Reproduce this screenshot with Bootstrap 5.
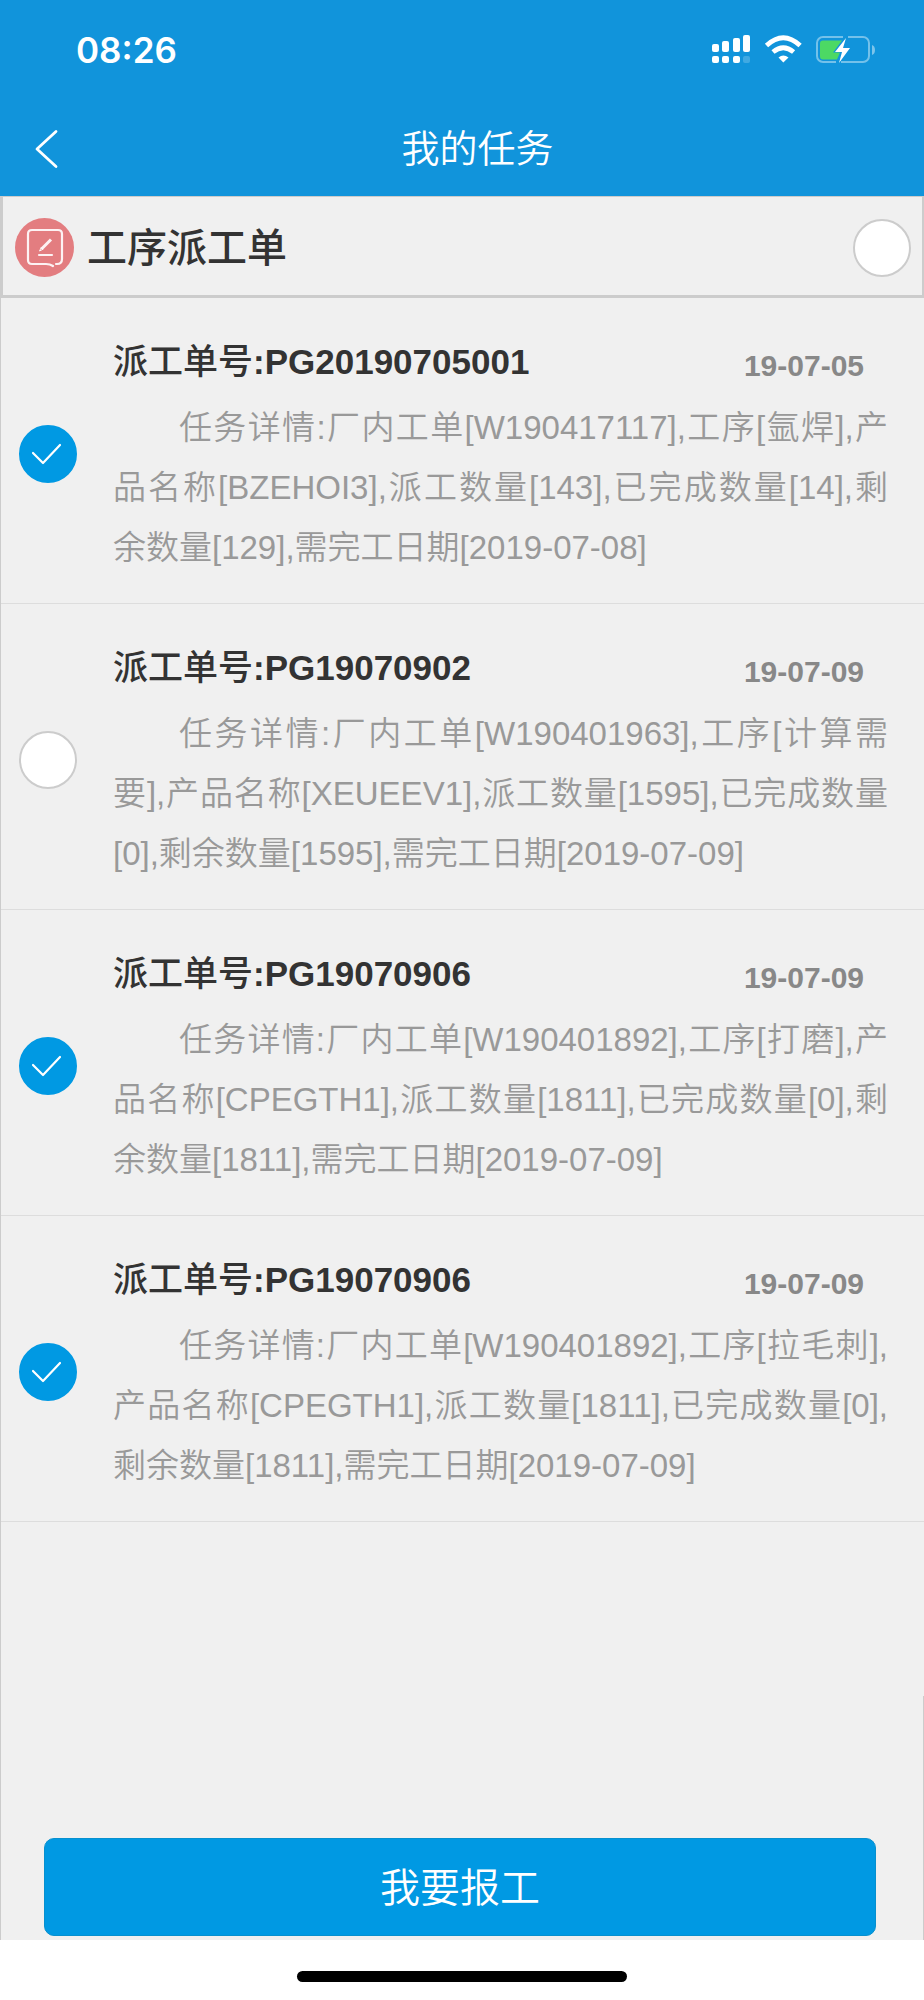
<!DOCTYPE html>
<html lang="zh-CN">
<head>
<meta charset="utf-8">
<meta name="viewport" content="width=device-width, initial-scale=1">
<title>我的任务</title>
<link href="https://cdn.jsdelivr.net/npm/bootstrap@5.3.0/dist/css/bootstrap.min.css" rel="stylesheet">
<style>
  body { font-family: "Liberation Sans", "Noto Sans CJK SC", sans-serif; color: #333; }
  .app-header { background: #1194db; }
  .status-bar { height: 100px; padding: 0 48px 0 76px; }
  .clock { font: 600 35px/1 Inter, sans-serif; }
  .nav-row { height: 96px; padding: 2px 33px 0 32px; }
  .back-btn { width: 32px; height: 48px; }
  .page-title { font-size: 38px; line-height: 48px; font-weight: 350; }
  .group-bar { height: 102px; padding: 4px 11px 0 12px; border: solid #ccc; border-width: 1px 2px 3px 3px; }
  .group-title { font-size: 40px; line-height: 60px; font-weight: 500; }
  .task-area { background: #f0f0f0; }
  .task-list { border-left: 1px solid #ccc; }
  .task-row { padding: 36px 36px 25px 18px; gap: 36px; border-bottom: 1px solid #ddd; }
  .task-no { font-size: 35px; line-height: 56px; font-weight: 500; margin-bottom: 8px; }
  .task-date { font-size: 30px; line-height: 56px; font-weight: 700; color: #888; padding: 4px 24px 0 0; }
  .task-detail { font-size: 33px; line-height: 60px; font-weight: 350; color: #999; text-indent: 2em; text-align: justify; }
  .round-check { appearance: none; width: 58px; height: 58px; margin: 0; border: 2px solid #ccc; border-radius: 50%; background: #fff; }
  .round-check:checked { border-color: #0099e3; background: #0099e3 url("data:image/svg+xml,%3Csvg xmlns='http://www.w3.org/2000/svg' viewBox='0 0 54 54'%3E%3Cpath d='M12 26l10 10 17-18' fill='none' stroke='%23fff' stroke-width='2.2' stroke-linecap='round' stroke-linejoin='round'/%3E%3C/svg%3E"); }
  .action-area { padding: 142px 47px 4px 43px; border: solid #ccc; border-width: 0 1px; }
  .report-btn { --bs-btn-color: #fff; --bs-btn-bg: #0099e3; --bs-btn-border-color: #0790cf; --bs-btn-hover-color: #fff; --bs-btn-hover-bg: #008fd5; height: 98px; padding: 8px 12px 6px; font-size: 40px; line-height: 56px; font-weight: 350; border-radius: 10px; }
  .home-area { height: 60px; padding-top: 31px; }
  .home-bar { width: 330px; height: 11px; background: #000; }
</style>
</head>
<body class="d-flex flex-column min-vh-100 bg-white">
<header class="app-header text-white">
  <div class="status-bar d-flex align-items-center justify-content-between">
    <span class="clock">08:26</span>
    <svg width="166" height="30" viewBox="0 0 166 30" role="img" aria-label="信号、无线网络、正在充电">
      <g fill="#fff">
        <rect x="2" y="9" width="7" height="8" rx="2"/><rect x="12" y="6" width="7" height="11" rx="2"/><rect x="23" y="3" width="7" height="14" rx="2"/><rect x="33" y="0" width="7" height="17" rx="2"/>
        <rect x="2" y="21" width="7" height="7" rx="2"/><rect x="12" y="21" width="7" height="7" rx="2"/><rect x="23" y="21" width="7" height="7" rx="2"/><rect x="33" y="21" width="7" height="7" rx="2" opacity=".2"/>
        <path d="M68.500 22.500Q73.300 18.600 78.500 22.500L73.300 27.600z"/>
      </g>
      <g fill="none" stroke="#fff" stroke-width="4.800">
        <path d="M56.500 10.500Q73.300-5 90.100 10.500"/><path d="M63 17Q73.300 8.500 83.600 17"/>
      </g>
      <path d="M133 2H113a6 6 0 0 0-6 6v13a6 6 0 0 0 6 6h13M138 2h15a6 6 0 0 1 6 6v13a6 6 0 0 1-6 6h-22" fill="none" stroke="#fff" stroke-opacity=".42" stroke-width="2"/>
      <path d="M162 10q3 1 3 5t-3 5z" fill="#fff" opacity=".45"/>
      <path d="M113 5.500h19l-9 12h7l-3 7h-14q-3 0-3-3v-13q0-3 3-3z" fill="#4cd964"/>
      <path d="M136 3l-11 14h7l-3 11 11-15h-7z" fill="#fff"/>
    </svg>
  </div>
  <div class="nav-row d-flex align-items-center">
    <button type="button" class="back-btn btn p-0 border-0 d-flex align-items-center" aria-label="返回">
      <svg width="32" height="40" viewBox="0 0 32 40"><path d="M24 2.500L5 20l19 17.500" fill="none" stroke="#fff" stroke-width="2.800" stroke-linecap="round" stroke-linejoin="round"/></svg>
    </button>
    <h1 class="page-title flex-grow-1 text-center m-0">我的任务</h1>
  </div>
</header>

<main class="task-area flex-grow-1 d-flex flex-column">
  <div class="group-bar d-flex align-items-center">
    <svg class="flex-shrink-0 me-2" width="60" height="60" viewBox="0 0 60 60" aria-hidden="true">
      <circle cx="29.500" cy="29.500" r="29.500" fill="#e37d80"/>
      <g fill="none" stroke="#fff" stroke-opacity=".9" stroke-width="2.200" stroke-linecap="round">
        <path d="M41 46h1q5 0 5-5V16q0-4-4-4H17q-4 0-4 4v26q0 4 4 4h14q4 0 7 2"/>
        <path d="M24 37h13"/>
        <path d="M36 21.500L26.500 31" stroke-width="3" stroke-linecap="butt"/>
        <path d="M26 30l-1.500 3 3-1.500z" stroke-width="1"/>
      </g>
    </svg>
    <label for="all" class="group-title flex-grow-1 ps-1">工序派工单</label>
    <input id="all" type="checkbox" class="round-check flex-shrink-0">
  </div>

  <div class="task-list flex-grow-1">
    <article class="task-row d-flex align-items-center">
      <input id="t1" type="checkbox" class="round-check flex-shrink-0 mb-1" checked>
      <div class="flex-grow-1">
        <div class="d-flex justify-content-between"><label for="t1" class="task-no">派工单号<b>:PG20190705001</b></label><time class="task-date">19-07-05</time></div>
        <p class="task-detail m-0">任务详情:厂内工单[W190417117],工序[氩焊],产品名称[BZEHOI3],派工数量[143],已完成数量[14],剩余数量[129],需完工日期[2019-07-08]</p>
      </div>
    </article>
    <article class="task-row d-flex align-items-center">
      <input id="t2" type="checkbox" class="round-check flex-shrink-0 mb-1">
      <div class="flex-grow-1">
        <div class="d-flex justify-content-between"><label for="t2" class="task-no">派工单号<b>:PG19070902</b></label><time class="task-date">19-07-09</time></div>
        <p class="task-detail m-0">任务详情:厂内工单[W190401963],工序[计算需要],产品名称[XEUEEV1],派工数量[1595],已完成数量[0],剩余数量[1595],需完工日期[2019-07-09]</p>
      </div>
    </article>
    <article class="task-row d-flex align-items-center">
      <input id="t3" type="checkbox" class="round-check flex-shrink-0 mb-1" checked>
      <div class="flex-grow-1">
        <div class="d-flex justify-content-between"><label for="t3" class="task-no">派工单号<b>:PG19070906</b></label><time class="task-date">19-07-09</time></div>
        <p class="task-detail m-0">任务详情:厂内工单[W190401892],工序[打磨],产品名称[CPEGTH1],派工数量[1811],已完成数量[0],剩余数量[1811],需完工日期[2019-07-09]</p>
      </div>
    </article>
    <article class="task-row d-flex align-items-center">
      <input id="t4" type="checkbox" class="round-check flex-shrink-0 mb-1" checked>
      <div class="flex-grow-1">
        <div class="d-flex justify-content-between"><label for="t4" class="task-no">派工单号<b>:PG19070906</b></label><time class="task-date">19-07-09</time></div>
        <p class="task-detail m-0">任务详情:厂内工单[W190401892],工序[拉毛刺],产品名称[CPEGTH1],派工数量[1811],已完成数量[0],剩余数量[1811],需完工日期[2019-07-09]</p>
      </div>
    </article>
  </div>

  <div class="action-area">
    <button type="button" class="report-btn btn w-100">我要报工</button>
  </div>
</main>

<footer class="home-area"><div class="home-bar rounded-pill mx-auto"></div></footer>
<script src="https://cdn.jsdelivr.net/npm/bootstrap@5.3.0/dist/js/bootstrap.bundle.min.js"></script>
</body>
</html>
